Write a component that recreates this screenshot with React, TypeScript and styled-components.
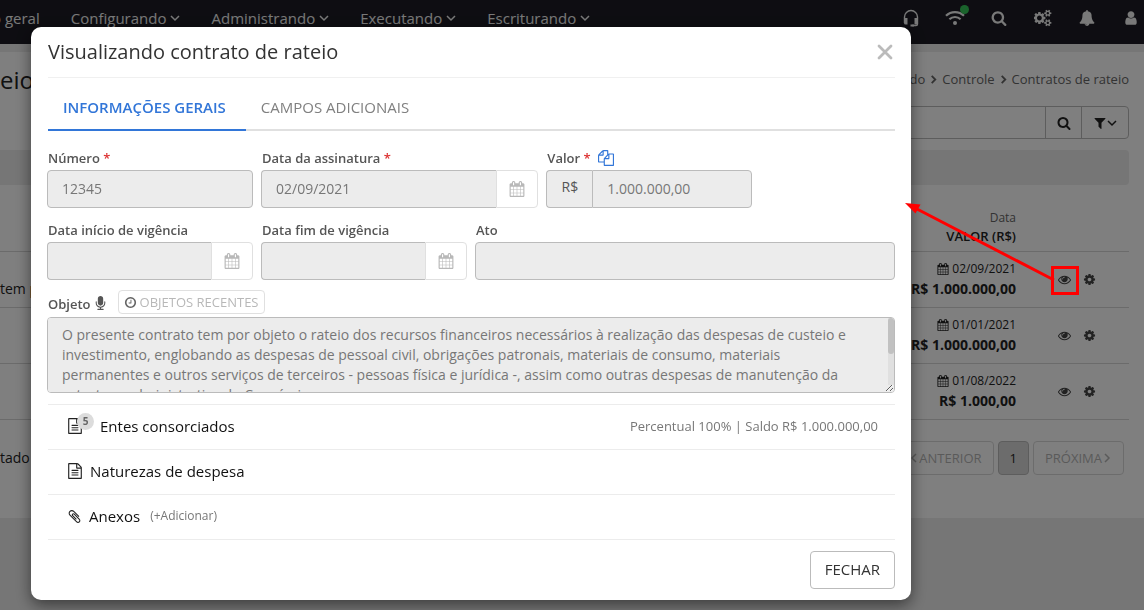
import React from "react";
import styled, { createGlobalStyle } from "styled-components";

const GlobalStyle = createGlobalStyle`
  *, *::before, *::after { box-sizing: border-box; }
  html { overflow: hidden; }
  body {
    margin: 0;
    background: #ececec;
    color: #222;
    font-family: "Open Sans", "Noto Sans", sans-serif;
    font-size: 14px;
    line-height: 20px;
  }
  button, input, textarea { font: inherit; color: inherit; }
  button { cursor: pointer; }
  a { color: inherit; text-decoration: none; }
`;

/* ---------- icons ---------- */

const glyphs = {
  calendar:
    "M192 1664h288v-288h-288v288zm352 0h320v-288h-320v288zm-352-352h288v-320h-288v320zm352 0h320v-320h-320v320zm-352-384h288v-288h-288v288zm736 736h320v-288h-320v288zm-384-736h320v-288h-320v288zm768 736h288v-288h-288v288zm-384-352h320v-320h-320v320zm-352-864v-288q0-13-9.5-22.5t-22.5-9.5h-64q-13 0-22.5 9.5t-9.5 22.5v288q0 13 9.5 22.5t22.5 9.5h64q13 0 22.5-9.5t9.5-22.5zm736 864h288v-320h-288v320zm-384-384h320v-288h-320v288zm384 0h288v-288h-288v288zm32-480v-288q0-13-9.5-22.5t-22.5-9.5h-64q-13 0-22.5 9.5t-9.5 22.5v288q0 13 9.5 22.5t22.5 9.5h64q13 0 22.5-9.5t9.5-22.5zm384-64v1280q0 52-38 90t-90 38h-1408q-52 0-90-38t-38-90v-1280q0-52 38-90t90-38h128v-96q0-66 47-113t113-47h64q66 0 113 47t47 113v96h384v-96q0-66 47-113t113-47h64q66 0 113 47t47 113v96h128q52 0 90 38t38 90z",
  search:
    "M1216 832q0-185-131.5-316.5t-316.5-131.5-316.5 131.5-131.5 316.5 131.5 316.5 316.5 131.5 316.5-131.5 131.5-316.5zm512 832q0 52-38 90t-90 38q-54 0-90-38l-343-342q-179 124-399 124-143 0-273.5-55.5t-225-150-150-225-55.5-273.5 55.5-273.5 150-225 225-150 273.5-55.5 273.5 55.5 225 150 150 225 55.5 273.5q0 220-124 399l343 343q37 37 37 90z",
  eye: "M1664 960q-152-236-381-353 61 104 61 225 0 185-131.5 316.5t-316.5 131.5-316.5-131.5-131.5-316.5q0-121 61-225-229 117-381 353 133 205 333.5 326.5t434.5 121.5 434.5-121.5 333.5-326.5zm-720-384q0-20-14-34t-34-14q-125 0-214.5 89.5t-89.5 214.5q0 20 14 34t34 14 34-14 14-34q0-86 61-147t147-61q20 0 34-14t14-34zm848 384q0 34-20 69-140 230-376.5 368.5t-499.5 138.5-499.5-139-376.5-368q-20-35-20-69t20-69q140-229 376.5-368t499.5-139 499.5 139 376.5 368q20 35 20 69z",
  cog: "M1152 896q0-106-75-181t-181-75-181 75-75 181 75 181 181 75 181-75 75-181zm512-109v222q0 12-8 23t-20 13l-185 28q-19 54-39 91 35 50 107 138 10 12 10 25t-9 23q-27 37-99 108t-94 71q-12 0-26-9l-138-108q-44 23-91 38-16 136-29 186-7 28-36 28h-222q-14 0-24.5-8.5t-11.5-21.5l-28-184q-49-16-90-37l-141 107q-10 9-25 9-14 0-25-11-126-114-165-168-7-10-7-23 0-12 8-23 15-21 51-66.5t54-70.5q-27-50-41-99l-183-27q-13-2-21-12.5t-8-23.5v-222q0-12 8-23t19-13l186-28q14-46 39-92-40-57-107-138-10-12-10-24 0-10 9-23 26-36 98.5-107.5t94.5-71.5q13 0 26 10l138 107q44-23 91-38 16-136 29-186 7-28 36-28h222q14 0 24.5 8.5t11.5 21.5l28 184q49 16 90 37l142-107q9-9 24-9 13 0 25 10 129 119 165 170 7 8 7 22 0 12-8 23-15 21-51 66.5t-54 70.5q26 50 41 98l183 28q13 2 21 12.5t8 23.5z",
  fileText:
    "M1596 380q28 28 48 76t20 88v1152q0 40-28 68t-68 28h-1344q-40 0-68-28t-28-68v-1600q0-40 28-68t68-28h896q40 0 88 20t76 48zm-444-244v376h376q-10-29-22-41l-313-313q-12-12-41-22zm384 1528v-1024h-416q-40 0-68-28t-28-68v-416h-768v1536h1280zm-1024-864q0-14 9-23t23-9h704q14 0 23 9t9 23v64q0 14-9 23t-23 9h-704q-14 0-23-9t-9-23v-64zm736 224q14 0 23 9t9 23v64q0 14-9 23t-23 9h-704q-14 0-23-9t-9-23v-64q0-14 9-23t23-9h704zm0 256q14 0 23 9t9 23v64q0 14-9 23t-23 9h-704q-14 0-23-9t-9-23v-64q0-14 9-23t23-9h704z",
  filter:
    "M1595 295q17 41-14 70l-493 493v742q0 42-39 59-13 5-25 5-27 0-45-19l-256-256q-19-19-19-45v-486l-493-493q-31-29-14-70 17-39 59-39h1280q42 0 59 39z",
  bell: "M912 1696q0-16-16-16-59 0-101.5-42.5t-42.5-101.5q0-16-16-16t-16 16q0 73 51.5 124.5t124.5 51.5q16 0 16-16zm816-288q0 52-38 90t-90 38h-448q0 106-75 181t-181 75-181-75-75-181h-448q-52 0-90-38t-38-90q50-42 91-88t85-119.5 74.5-158.5 50-206 19.5-260q0-152 117-282.5t307-158.5q-8-19-8-39 0-40 28-68t68-28 68 28 28 68q0 20-8 39 190 28 307 158.5t117 282.5q0 139 19.5 260t50 206 74.5 158.5 85 119.5 91 88z",
  user: "M1536 1399q0 109-62.5 187t-150.5 78h-854q-88 0-150.5-78t-62.5-187q0-85 8.5-160.5t31.5-152 58.5-131 94-89 134.5-34.5q131 128 313 128t313-128q76 0 134.5 34.5t94 89 58.5 131 31.5 152 8.5 160.5zm-256-887q0 159-112.5 271.5t-271.5 112.5-271.5-112.5-112.5-271.5 112.5-271.5 271.5-112.5 271.5 112.5 112.5 271.5z",
  clock:
    "M1024 544v448q0 14-9 23t-23 9h-320q-14 0-23-9t-9-23v-64q0-14 9-23t23-9h224v-352q0-14 9-23t23-9h64q14 0 23 9t9 23zm416 352q0-148-73-273t-198-198-273-73-273 73-198 198-73 273 73 273 198 198 273 73 273-73 198-198 73-273zm224 0q0 209-103 385.5t-279.5 279.5-385.5 103-385.5-103-279.5-279.5-103-385.5 103-385.5 279.5-279.5 385.5-103 385.5 103 279.5 279.5 103 385.5z",
  microphone:
    "M1472 704v128q0 221-147.5 384.5t-364.5 187.5v132h256q26 0 45 19t19 45-19 45-45 19h-640q-26 0-45-19t-19-45 19-45 45-19h256v-132q-217-24-364.5-187.5t-147.5-384.5v-128q0-26 19-45t45-19 45 19 19 45v128q0 185 131.5 316.5t316.5 131.5 316.5-131.5 131.5-316.5v-128q0-26 19-45t45-19 45 19 19 45zm-256-384v512q0 132-94 226t-226 94-226-94-94-226v-512q0-132 94-226t226-94 226 94 94 226z",
  paperclip:
    "M1596 1385q0 117-79 196t-196 79q-135 0-235-100l-777-776q-113-115-113-271 0-159 110-270t269-111q158 0 273 113l605 606q10 10 10 22 0 16-30.5 46.5t-46.5 30.5q-13 0-23-10l-606-607q-79-77-181-77-106 0-179 75t-73 181q0 105 76 181l776 777q63 63 145 63 64 0 106-42t42-106q0-82-63-145l-581-581q-26-24-60-24-29 0-48 19t-19 48q0 32 25 59l410 410q10 10 10 22 0 16-31 47t-47 31q-12 0-22-10l-410-410q-63-61-63-149 0-82 57-139t139-57q88 0 149 63l581 581q100 98 100 235z",
  copy: "M1696 384q40 0 68 28t28 68v1216q0 40-28 68t-68 28h-960q-40 0-68-28t-28-68v-288h-544q-40 0-68-28t-28-68v-672q0-40 20-88t48-76l408-408q28-28 76-48t88-20h416q40 0 68 28t28 68v328q68-40 128-40h416zm-544 213l-299 299h299v-299zm-640-384l-299 299h299v-299zm196 647l316-316v-416h-384v416q0 40-28 68t-68 28h-416v640h512v-256q0-40 20-88t48-76zm956 804v-1152h-384v416q0 40-28 68t-68 28h-416v640h896z",
  cogs: "M832 896q0-106-75-181t-181-75-181 75-75 181 75 181 181 75 181-75 75-181zm768 512q0-52-38-90t-90-38-90 38-38 90q0 53 37.5 90.5t90.5 37.5 90.5-37.5 37.5-90.5zm0-1024q0-52-38-90t-90-38-90 38-38 90q0 53 37.5 90.5t90.5 37.5 90.5-37.5 37.5-90.5zm-384 421v185q0 10-7 19.5t-16 10.5l-155 24q-11 35-32 76 34 48 90 115 7 11 7 20 0 12-7 19-23 30-82.5 89.5t-78.5 59.5q-11 0-21-7l-115-90q-37 19-77 31-11 108-23 155-7 24-30 24h-186q-11 0-20-7.5t-10-17.5l-23-153q-34-10-75-31l-118 89q-7 7-20 7-11 0-21-8-144-133-144-160 0-9 7-19 10-14 41-53t47-61q-23-44-35-82l-152-24q-10-1-17-9.5t-7-19.5v-185q0-10 7-19.5t16-10.5l155-24q11-35 32-76-34-48-90-115-7-11-7-20 0-12 7-20 22-30 82-89t79-59q11 0 21 7l115 90q34-18 77-32 11-108 23-154 7-24 30-24h186q11 0 20 7.5t10 17.5l23 153q34 10 75 31l118-89q8-7 20-7 11 0 21 8 144 133 144 160 0 8-7 19-12 16-42 54t-45 60q23 48 34 82l152 23q10 2 17 10.5t7 19.5zm640 533v140q0 16-149 31-12 27-30 52 51 113 51 138 0 4-4 7-122 71-124 71-8 0-46-47t-52-68q-20 2-30 2t-30-2q-14 21-52 68t-46 47q-2 0-124-71-4-3-4-7 0-25 51-138-18-25-30-52-149-15-149-31v-140q0-16 149-31 13-29 30-52-51-113-51-138 0-4 4-7 4-2 35-20t59-34 30-16q8 0 46 46.5t52 67.5q20-2 30-2t30 2q51-71 92-112l6-2q4 0 124 70 4 3 4 7 0 25-51 138 17 23 30 52 149 15 149 31zm0-1024v140q0 16-149 31-12 27-30 52 51 113 51 138 0 4-4 7-122 71-124 71-8 0-46-47t-52-68q-20 2-30 2t-30-2q-14 21-52 68t-46 47q-2 0-124-71-4-3-4-7 0-25 51-138-18-25-30-52-149-15-149-31v-140q0-16 149-31 13-29 30-52-51-113-51-138 0-4 4-7 4-2 35-20t59-34 30-16q8 0 46 46.5t52 67.5q20-2 30-2t30 2q51-71 92-112l6-2q4 0 124 70 4 3 4 7 0 25-51 138 17 23 30 52 149 15 149 31z",
};

const Svg = styled.svg`
  display: block;
  flex: none;
`;

function Glyph({ name, size = 14 }: { name: keyof typeof glyphs; size?: number }) {
  const box = name === "cogs" ? "0 0 1920 1792" : "0 0 1792 1792";
  return (
    <Svg width={size} height={size} viewBox={box} fill="currentColor" aria-hidden>
      <path d={glyphs[name]} />
    </Svg>
  );
}

function Chevron({ dir = "down", size = 10, weight = 1.5 }: { dir?: "down" | "left" | "right"; size?: number; weight?: number }) {
  const d = { down: "M1 3 L5 7 L9 3", left: "M7 1 L3 5 L7 9", right: "M3 1 L7 5 L3 9" }[dir];
  return (
    <Svg width={size} height={size} viewBox="0 0 10 10" fill="none" stroke="currentColor" strokeWidth={weight} aria-hidden>
      <path d={d} />
    </Svg>
  );
}

function Headset() {
  return (
    <Svg width="16" height="18" viewBox="0 0 16 18" fill="none" stroke="currentColor" aria-hidden>
      <path d="M1.5 14 V8 A6.5 6.5 0 0 1 14.5 8 V15 Q14.5 16.5 13 16.5 H9" strokeWidth="1.4" />
      <path d="M1 9 H4.500 V15.500 H2.5 Q1 15.500 1 14 Z M11.500 9 H15 V14 Q15 15.500 13.5 15.500 H11.500 Z M7.5 15.5 H11 V17.5 H7.5 Z" fill="currentColor" stroke="none" />
    </Svg>
  );
}

function Wifi() {
  return (
    <Svg width="20" height="16" viewBox="0 0 20 16" fill="none" stroke="currentColor" strokeWidth="2.2" aria-hidden>
      <path d="M1 5.8 C6 0.8 14 0.8 19 5.8 M4.4 9.3 C7.6 6.2 12.4 6.2 15.6 9.3" />
      <circle cx="10" cy="13" r="2" fill="currentColor" stroke="none" />
    </Svg>
  );
}

/* ---------- page behind the dialog ---------- */

const NavBar = styled.header`
  display: flex;
  align-items: center;
  justify-content: space-between;
  height: 44px;
  padding: 0 5px 9px 0;
  background: #1c1b24;
  color: #f2f2f2;
  overflow: hidden;
`;

const Menu = styled.nav`
  display: flex;
  gap: 31px;
  margin-left: -8px;
  font-size: 15px;
`;

const MenuLink = styled.a`
  display: flex;
  align-items: center;
  gap: 4px;
  white-space: nowrap;
`;

const Tools = styled.div`
  display: flex;
  align-items: center;
  gap: 28px;
`;

const ToolButton = styled.button`
  position: relative;
  display: flex;
  justify-content: center;
  width: 16px;
  padding: 0;
  border: 0;
  background: none;
`;

const StatusDot = styled.span`
  position: absolute;
  top: -5px;
  right: -6px;
  width: 9px;
  height: 9px;
  border-radius: 50%;
  background: #34c759;
`;

const Panel = styled.main`
  margin-top: 8px;
  padding: 10px 15px 43px 0;
  background: #fff;
`;

const PanelHead = styled.div`
  display: flex;
  align-items: center;
  justify-content: space-between;
  height: 36px;
`;

const PageTitle = styled.h1`
  margin: 0;
  font-size: 24px;
  font-weight: 400;
  line-height: 36px;
`;

const Crumbs = styled.nav`
  display: flex;
  align-items: center;
  gap: 4px;
  padding-bottom: 2px;
  color: #666;
  font-size: 13px;
`;

const SearchBar = styled.form`
  display: flex;
  width: 60%;
  height: 33px;
  margin: 8px 0 0 auto;
  border: 1px solid #bbb;
  border-radius: 4px;
`;

const SearchInput = styled.input`
  flex: 1;
  min-width: 0;
  border: 0;
  background: none;
`;

const SearchButton = styled.button<{ $wide?: boolean }>`
  display: flex;
  align-items: center;
  justify-content: center;
  width: ${(p) => (p.$wide ? 47 : 36)}px;
  padding: 0;
  border: 0;
  border-left: 1px solid #bbb;
  background: none;
`;

const Strip = styled.div`
  height: 35px;
  margin-top: 11px;
  border-radius: 0 4px 4px 0;
  background: #ececec;
`;

const Grid = styled.table`
  width: 100%;
  border-collapse: collapse;
`;

const HeadCell = styled.th`
  height: 66px;
  padding: 0 0 6px;
  border-bottom: 1px solid #d6d6d6;
  text-align: right;
  vertical-align: bottom;
  font-size: 13px;
  font-weight: 600;
  line-height: 18px;
`;

const HeadHint = styled.div`
  color: #666;
  font-size: 12px;
  font-weight: 400;
`;

const Cell = styled.td<{ $end?: boolean }>`
  height: 56px;
  padding: 0;
  border-bottom: 1px solid #d6d6d6;
  text-align: ${(p) => (p.$end ? "right" : "left")};
`;

const ActionCell = styled(Cell)`
  width: 113px;
  padding-left: 42px;
`;

const Stamp = styled.div`
  display: flex;
  align-items: center;
  justify-content: flex-end;
  gap: 3px;
  font-size: 12px;
`;

const Amount = styled.div`
  font-weight: 700;
`;

const Actions = styled.div`
  display: flex;
  gap: 12px;
  color: #444;
`;

const IconButton = styled.button`
  padding: 0;
  border: 0;
  background: none;
`;

const PagerRow = styled.div`
  display: flex;
  align-items: center;
  justify-content: space-between;
  margin-top: 21px;
  padding-right: 5px;
`;

const Pager = styled.nav`
  display: flex;
  gap: 4px;
`;

const PageButton = styled.button<{ $current?: boolean }>`
  display: flex;
  align-items: center;
  height: 34px;
  padding: 0 11px;
  border: 1px solid ${(p) => (p.$current ? "#bbb" : "#d9d9d9")};
  border-radius: 4px;
  background: ${(p) => (p.$current ? "#d9d9d9" : "#fff")};
  color: ${(p) => (p.$current ? "#222" : "#b5b5b5")};
  font-size: 13px;
`;

/* ---------- dialog ---------- */

const Backdrop = styled.div`
  position: fixed;
  inset: 0;
  overflow: hidden;
  background: rgba(0, 0, 0, 0.5);
`;

const Dialog = styled.section`
  margin: 27px 233px 10px 31px;
  padding: 0 16px 11px;
  border-radius: 10px;
  background: #fff;
  box-shadow: 0 5px 15px rgba(0, 0, 0, 0.5);
`;

const DialogHead = styled.header`
  display: flex;
  align-items: center;
  justify-content: space-between;
  height: 51px;
  margin-left: 1px;
  border-bottom: 1px solid #f0f0f0;
`;

const DialogTitle = styled.h2`
  margin: 0;
  font-size: 20px;
  font-weight: 400;
  color: #333;
`;

const CloseButton = styled.button`
  padding: 0 2px;
  border: 0;
  background: none;
  color: #bbb;
`;

const Tabs = styled.div`
  display: flex;
  margin: 7px 0 0 1px;
  border-bottom: 2px solid #e0e0e0;
`;

const Tab = styled.button<{ $active?: boolean }>`
  height: 46px;
  margin-bottom: -2px;
  padding: 0 20px 0 15px;
  border: 0;
  border-bottom: 2px solid ${(p) => (p.$active ? "#3276d8" : "transparent")};
  background: none;
  color: ${(p) => (p.$active ? "#3276d8" : "#808080")};
  font-size: 15px;
  font-weight: ${(p) => (p.$active ? 600 : 400)};
`;

const Fields = styled.div`
  display: grid;
  grid-template-columns: repeat(12, 1fr);
  gap: 12px 8px;
  margin-top: 17px;
`;

const Field = styled.div<{ $span: number }>`
  grid-column: span ${(p) => p.$span};
  min-width: 0;
`;

const LabelRow = styled.div<{ $tall?: boolean }>`
  display: flex;
  align-items: center;
  gap: 2px;
  height: ${(p) => (p.$tall ? 25 : 22)}px;
  padding: 0 0 2px 1px;
  color: #555;
`;

const Label = styled.label`
  font-size: 13px;
  font-weight: 600;
`;

const Required = styled.span`
  color: #dd3333;
`;

const Group = styled.div`
  display: flex;
  height: 38px;
`;

const TextBox = styled.input<{ $joined?: "left" | "right" }>`
  flex: 1;
  width: 100%;
  min-width: 0;
  height: 38px;
  padding: 0 14px 2px;
  border: 1px solid #bbb;
  border-right-width: ${(p) => (p.$joined === "right" ? 0 : 1)}px;
  border-radius: ${(p) => (p.$joined === "right" ? "4px 0 0 4px" : p.$joined === "left" ? "0 4px 4px 0" : "4px")};
  background: #ececec;
  color: #777;
`;

const DateButton = styled.button`
  display: flex;
  align-items: center;
  justify-content: center;
  width: 42px;
  padding: 0;
  border: 1px solid #e0e0e0;
  border-radius: 0 4px 4px 0;
  background: #fff;
  color: #b8b8b8;
`;

const Prefix = styled.span`
  width: 46px;
  padding-top: 6px;
  border: 1px solid #bbb;
  border-right: 0;
  border-radius: 4px 0 0 4px;
  background: #ececec;
  color: #555;
  text-align: center;
`;

const CopyButton = styled(IconButton)`
  margin-left: 5px;
  color: #3276d8;
`;

const RecentButton = styled.button`
  display: flex;
  align-items: center;
  gap: 3px;
  height: 24px;
  margin: 0 0 3px 8px;
  padding: 0 5px;
  border: 1px solid #e0e0e0;
  border-radius: 4px;
  background: #fff;
  color: #b8b8b8;
  font-size: 13px;

  svg { color: #666; }
`;

const Memo = styled.textarea`
  display: block;
  width: 100%;
  height: 76px;
  padding: 7px 24px 7px 14px;
  border: 1px solid #bbb;
  border-radius: 4px;
  background: #ececec;
  color: #777;
  line-height: 20px;
`;

const MemoFrame = styled.div`
  position: relative;
`;

const MemoTrack = styled.div`
  position: absolute;
  top: 1px;
  right: 1px;
  bottom: 8px;
  width: 6px;
  border-radius: 0 3px 0 0;
  background: #e0e0e0;
  pointer-events: none;
`;

const MemoThumb = styled.div`
  height: 36px;
  border-radius: 3px;
  background: #c1c1c1;
`;

const Sections = styled.ul`
  margin: 11px 0 0 1px;
  padding: 0;
  border-top: 1px solid #ececec;
  list-style: none;
`;

const Section = styled.li`
  display: flex;
  align-items: center;
  height: 45px;
  padding: 0 17px 2px 19px;
  border-bottom: 1px solid #ececec;
  font-size: 15px;
`;

const SectionIcon = styled.span`
  position: relative;
  margin-right: 7px;
`;

const Count = styled.span`
  position: absolute;
  top: -5px;
  left: 10px;
  width: 17px;
  height: 17px;
  border-radius: 50%;
  background: #dcdcdc;
  color: #666;
  font-size: 10px;
  font-weight: 700;
  line-height: 16px;
  text-align: center;
`;

const SectionName = styled.span<{ $counted?: boolean }>`
  padding-left: ${(p) => (p.$counted ? 10 : 0)}px;
  color: #111;
`;

const Summary = styled.span`
  margin-left: auto;
  color: #777;
  font-size: 13px;
`;

const AddLink = styled.a`
  margin-left: 10px;
  color: #777;
  font-size: 12px;
`;

const DialogFoot = styled.footer`
  display: flex;
  justify-content: flex-end;
  padding-top: 11px;
`;

const FooterButton = styled.button`
  height: 38px;
  padding: 0 14px 2px;
  border: 1px solid #bbb;
  border-radius: 4px;
  background: #fff;
  color: #333;
  font-size: 15px;
`;

/* Red marker that points from the row's view action to the dialog. */
const Pointer = styled.svg`
  position: absolute;
  top: 200px;
  right: 64px;
  pointer-events: none;
`;

const menus = ["Configurando", "Administrando", "Executando", "Escriturando"];

const contracts = [
  { text: "tem p", date: "02/09/2021", amount: "R$ 1.000.000,00" },
  { text: "", date: "01/01/2021", amount: "R$ 1.000.000,00" },
  { text: "", date: "01/08/2022", amount: "R$ 1.000,00" },
];

const objectText =
  "O presente contrato tem por objeto o rateio dos recursos financeiros necessários à realização das despesas de custeio e investimento, englobando as despesas de pessoal civil, obrigações patronais, materiais de consumo, materiais permanentes e outros serviços de terceiros - pessoas física e jurídica -, assim como outras despesas de manutenção da estrutura administrativa do Consórcio.";

function DateField({ id, label, value = "", span, required }: { id: string; label: string; value?: string; span: number; required?: boolean }) {
  return (
    <Field $span={span}>
      <LabelRow>
        <Label htmlFor={id}>
          {label} {required && <Required>*</Required>}
        </Label>
      </LabelRow>
      <Group>
        <TextBox id={id} $joined="right" defaultValue={value} readOnly />
        <DateButton type="button" aria-label="Abrir calendário">
          <Glyph name="calendar" size={16} />
        </DateButton>
      </Group>
    </Field>
  );
}

export default function App() {
  return (
    <>
      <GlobalStyle />
      <NavBar>
        <Menu>
          <MenuLink href="#">o geral</MenuLink>
          {menus.map((name) => (
            <MenuLink href="#" key={name}>
              {name}
              <Chevron />
            </MenuLink>
          ))}
        </Menu>
        <Tools>
          <ToolButton aria-label="Suporte"><Headset /></ToolButton>
          <ToolButton aria-label="Conexão"><Wifi /><StatusDot /></ToolButton>
          <ToolButton aria-label="Pesquisar"><Glyph name="search" size={16} /></ToolButton>
          <ToolButton aria-label="Configurações"><Glyph name="cogs" size={18} /></ToolButton>
          <ToolButton aria-label="Notificações"><Glyph name="bell" size={16} /></ToolButton>
          <ToolButton aria-label="Usuário"><Glyph name="user" size={16} /></ToolButton>
        </Tools>
      </NavBar>

      <Panel>
        <PanelHead>
          <PageTitle>eio</PageTitle>
          <Crumbs>
            <a href="#">Executando</a>
            <Chevron dir="right" size={9} weight={2} />
            <a href="#">Controle</a>
            <Chevron dir="right" size={9} weight={2} />
            <a href="#">Contratos de rateio</a>
          </Crumbs>
        </PanelHead>
        <SearchBar>
          <SearchInput aria-label="Pesquisar contratos" />
          <SearchButton type="button" aria-label="Pesquisar"><Glyph name="search" /></SearchButton>
          <SearchButton type="button" aria-label="Filtros" $wide>
            <Glyph name="filter" />
            <Chevron />
          </SearchButton>
        </SearchBar>
        <Strip />
        <Grid>
          <thead>
            <tr>
              <HeadCell />
              <HeadCell>
                <HeadHint>Data</HeadHint>
                VALOR (R$)
              </HeadCell>
              <HeadCell />
            </tr>
          </thead>
          <tbody>
            {contracts.map((c) => (
              <tr key={c.date}>
                <Cell><br />{c.text}</Cell>
                <Cell $end>
                  <Stamp><Glyph name="calendar" size={12} />{c.date}</Stamp>
                  <Amount>{c.amount}</Amount>
                </Cell>
                <ActionCell>
                  <Actions>
                    <IconButton aria-label="Visualizar"><Glyph name="eye" size={13} /></IconButton>
                    <IconButton aria-label="Opções"><Glyph name="cog" size={13} /></IconButton>
                  </Actions>
                </ActionCell>
              </tr>
            ))}
          </tbody>
        </Grid>
        <PagerRow>
          <span>tado</span>
          <Pager>
            <PageButton><Chevron dir="left" />ANTERIOR</PageButton>
            <PageButton $current>1</PageButton>
            <PageButton>PRÓXIMA<Chevron dir="right" /></PageButton>
          </Pager>
        </PagerRow>
      </Panel>

      <Backdrop>
        <Dialog role="dialog" aria-labelledby="dialog-title">
          <DialogHead>
            <DialogTitle id="dialog-title">Visualizando contrato de rateio</DialogTitle>
            <CloseButton aria-label="Fechar">
              <Svg width="16" height="16" viewBox="0 0 16 16" stroke="currentColor" strokeWidth="2.8" strokeLinecap="round">
                <path d="M2 2 L14 14 M14 2 L2 14" />
              </Svg>
            </CloseButton>
          </DialogHead>
          <Tabs role="tablist">
            <Tab role="tab" aria-selected $active>INFORMAÇÕES GERAIS</Tab>
            <Tab role="tab">CAMPOS ADICIONAIS</Tab>
          </Tabs>

          <Fields>
            <Field $span={3}>
              <LabelRow>
                <Label htmlFor="numero">Número <Required>*</Required></Label>
              </LabelRow>
              <TextBox id="numero" defaultValue="12345" readOnly />
            </Field>
            <DateField id="assinatura" label="Data da assinatura" value="02/09/2021" span={4} required />
            <Field $span={3}>
              <LabelRow>
                <Label htmlFor="valor">Valor <Required>*</Required></Label>
                <CopyButton type="button" aria-label="Copiar valor"><Glyph name="copy" size={16} /></CopyButton>
              </LabelRow>
              <Group>
                <Prefix>R$</Prefix>
                <TextBox id="valor" $joined="left" defaultValue="1.000.000,00" readOnly />
              </Group>
            </Field>
            <DateField id="inicio" label="Data início de vigência" span={3} />
            <DateField id="fim" label="Data fim de vigência" span={3} />
            <Field $span={6}>
              <LabelRow>
                <Label htmlFor="ato">Ato</Label>
              </LabelRow>
              <TextBox id="ato" readOnly />
            </Field>
            <Field $span={12}>
              <LabelRow $tall>
                <Label htmlFor="objeto">Objeto</Label>
                <Glyph name="microphone" size={15} />
                <RecentButton type="button"><Glyph name="clock" size={13} />OBJETOS RECENTES</RecentButton>
              </LabelRow>
              <MemoFrame>
                <Memo id="objeto" defaultValue={objectText} readOnly />
                <MemoTrack><MemoThumb /></MemoTrack>
              </MemoFrame>
            </Field>
          </Fields>

          <Sections>
            <Section>
              <SectionIcon><Glyph name="fileText" size={16} /><Count>5</Count></SectionIcon>
              <SectionName $counted>Entes consorciados</SectionName>
              <Summary>Percentual 100% | Saldo R$ 1.000.000,00</Summary>
            </Section>
            <Section>
              <SectionIcon><Glyph name="fileText" size={16} /></SectionIcon>
              <SectionName>Naturezas de despesa</SectionName>
            </Section>
            <Section>
              <SectionIcon><Glyph name="paperclip" size={15} /></SectionIcon>
              <SectionName>Anexos</SectionName>
              <AddLink href="#">(+Adicionar)</AddLink>
            </Section>
          </Sections>

          <DialogFoot>
            <FooterButton type="button">FECHAR</FooterButton>
          </DialogFoot>
        </Dialog>

        <Pointer width="176" height="96" viewBox="904 200 176 96" fill="none" stroke="#ff0000" strokeWidth="3" aria-hidden>
          <rect x="1052.5" y="267.5" width="25" height="26" />
          <path d="M1054 280 L916 208.500" />
          <path d="M905 203 L920.500 204.500 L915.500 213.500 Z" fill="#ff0000" stroke="none" />
        </Pointer>
      </Backdrop>
    </>
  );
}
